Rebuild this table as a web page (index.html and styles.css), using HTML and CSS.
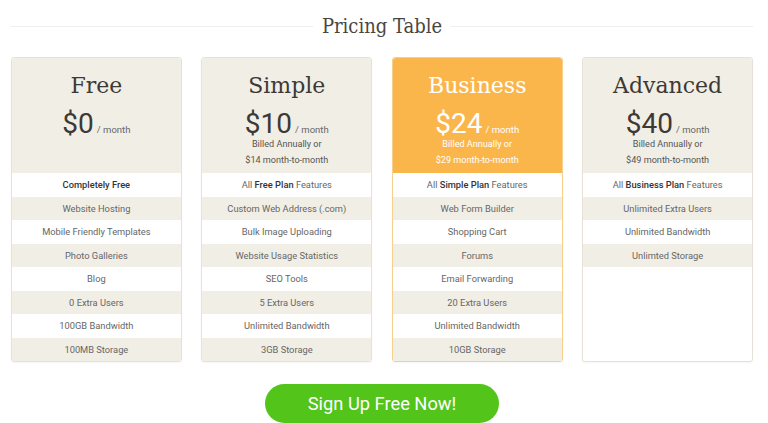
FILE: index.html
```html
<!DOCTYPE html>
<html>
<head>
<meta charset="utf-8">
<link rel="stylesheet" href="styles.css">
</head>
<body>
<div class="page">
  <div class="title-row">
    <span class="rule"></span>
    <h1 class="title">Pricing Table</h1>
    <span class="rule"></span>
  </div>
  <div class="plans">
    <div class="plan">
      <div class="head">
        <div class="name">Free</div>
        <div class="price"><span class="amt">$0</span><span class="per">/ month</span></div>
      </div>
      <ul class="features">
        <li><b>Completely Free</b></li>
        <li>Website Hosting</li>
        <li>Mobile Friendly Templates</li>
        <li>Photo Galleries</li>
        <li>Blog</li>
        <li>0 Extra Users</li>
        <li>100GB Bandwidth</li>
        <li>100MB Storage</li>
      </ul>
    </div>
    <div class="plan">
      <div class="head">
        <div class="name">Simple</div>
        <div class="price"><span class="amt">$10</span><span class="per">/ month</span></div>
        <div class="billed">Billed Annually or</div>
        <div class="billed">$14 month-to-month</div>
      </div>
      <ul class="features">
        <li>All <b>Free Plan</b> Features</li>
        <li>Custom Web Address (.com)</li>
        <li>Bulk Image Uploading</li>
        <li>Website Usage Statistics</li>
        <li>SEO Tools</li>
        <li>5 Extra Users</li>
        <li>Unlimited Bandwidth</li>
        <li>3GB Storage</li>
      </ul>
    </div>
    <div class="plan featured">
      <div class="head">
        <div class="name">Business</div>
        <div class="price"><span class="amt">$24</span><span class="per">/ month</span></div>
        <div class="billed">Billed Annually or</div>
        <div class="billed">$29 month-to-month</div>
      </div>
      <ul class="features">
        <li>All <b>Simple Plan</b> Features</li>
        <li>Web Form Builder</li>
        <li>Shopping Cart</li>
        <li>Forums</li>
        <li>Email Forwarding</li>
        <li>20 Extra Users</li>
        <li>Unlimited Bandwidth</li>
        <li>10GB Storage</li>
      </ul>
    </div>
    <div class="plan">
      <div class="head">
        <div class="name">Advanced</div>
        <div class="price"><span class="amt">$40</span><span class="per">/ month</span></div>
        <div class="billed">Billed Annually or</div>
        <div class="billed">$49 month-to-month</div>
      </div>
      <ul class="features">
        <li>All <b>Business Plan</b> Features</li>
        <li>Unlimited Extra Users</li>
        <li>Unlimited Bandwidth</li>
        <li>Unlimted Storage</li>
      </ul>
    </div>
  </div>
  <div class="cta-row">
    <a class="cta" href="#">Sign Up Free Now!</a>
  </div>
</div>
</body>
</html>
```
FILE: styles.css
```css
* { box-sizing: border-box; }
html, body { margin: 0; padding: 0; background: #fff; }
body { font-family: Roboto, "Liberation Sans", sans-serif; color: #555; overflow: hidden; }
.page { width: 768px; height: 423px; padding: 11px 15px 0 11px; }
.title-row { display: flex; align-items: center; gap: 9px; height: 30px; }
.rule { flex: 1; height: 1px; background: #f1efeb; margin-top: 1px; }
.title { margin: 0; font-family: "DejaVu Serif Condensed", "DejaVu Serif", "Liberation Serif", serif; font-stretch: semi-condensed; font-weight: normal; font-size: 20px; color: #4a4540; }
.plans { display: grid; width: 742px; grid-template-columns: repeat(4, 1fr); column-gap: 19.7px; margin-top: 16px; align-items: stretch; }
.plan { border: 1px solid #e6e2d8; border-radius: 3px; background: #fff; display: flex; flex-direction: column; box-shadow: 0 1px 2px rgba(0,0,0,0.04); }
.head { flex-shrink: 0; height: 115px; background: #f1eee6; text-align: center; padding-top: 13px; color: #3d3935; border-radius: 3px 3px 0 0; }
.name { font-family: "DejaVu Serif", "Liberation Serif", serif; font-size: 22px; line-height: 30px; }
.price { margin-top: 9px; line-height: 28px; height: 28px; }
.amt { font-size: 28px; }
.per { font-size: 9.5px; color: #666; margin-left: 3px; }
.billed { font-size: 9.1px; line-height: 16px; color: #555; }
.price + .billed { margin-top: -2px; }
.featured { border-color: #f5cf8c; }
.featured .head { background: #fbb64b; color: #fff; }
.featured .head .per, .featured .head .billed { color: #fff; }
.features { list-style: none; margin: 0; padding: 0; }
.features li { height: 23.5px; line-height: 23.5px; text-align: center; font-size: 9.3px; color: #666; }
.features li:nth-child(even) { background: #f1eee6; }
.features b { color: #333; font-weight: 500; }
.cta-row { display: flex; justify-content: center; margin-top: 22px; }
.cta { width: 234px; height: 39px; border-radius: 20px; background: #52c41a; color: #fff; text-decoration: none; font-size: 18.3px; display: flex; align-items: center; justify-content: center; }
```
